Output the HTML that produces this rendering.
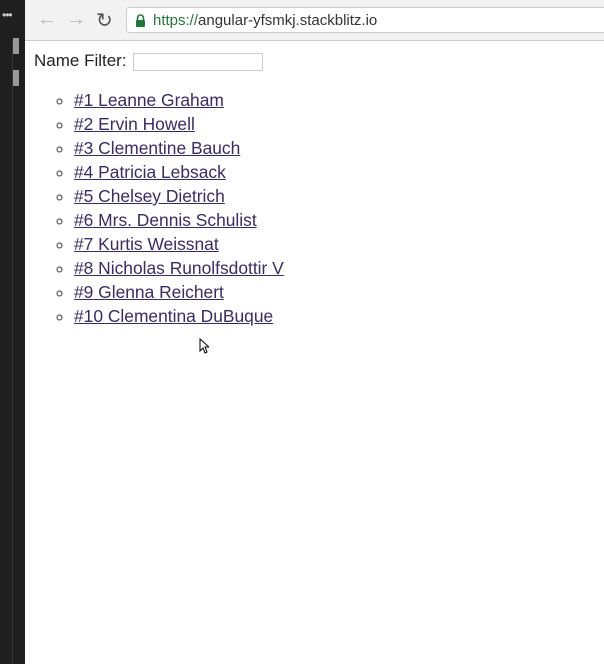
<!DOCTYPE html>
<html><head><style>
body{margin:0;width:604px;height:664px;overflow:hidden;background:#fff;position:relative;font-family:"Liberation Sans",sans-serif}
#side{position:absolute;left:0;top:0;width:25px;height:664px;background:#1f1f1f}
#side .ln{position:absolute;left:12px;top:40px;width:1px;height:624px;background:#333}
#side .b1{position:absolute;left:13px;top:38px;width:6px;height:16px;background:#999}
#side .b2{position:absolute;left:13px;top:70px;width:6px;height:16px;background:#999}
#side .dots{position:absolute;left:2px;top:8px;color:#ccc;font-size:12px;letter-spacing:-1px}
#bar{position:absolute;left:25px;top:0;width:579px;height:40px;background:#f2f2f2;border-bottom:1px solid #ccc}
#url{position:absolute;left:126px;top:7px;width:490px;height:26px;background:#fff;border:1px solid #ccc;border-radius:3px;box-sizing:border-box}
#url .t{position:absolute;left:26px;top:4px;font-size:15px;color:#333;white-space:nowrap}
#url .g{color:#1f7a3a}
.nav{position:absolute;top:8px;font-size:20px;color:#bbb}
#page{position:absolute;left:34px;top:51px}
.lab{font-size:17px;color:#222}
input{width:128px;height:16px;border:1px solid #ccc;vertical-align:middle;margin-left:6px;padding:0}
ul{margin:0;padding:0;position:absolute;left:40px;top:37px;list-style:circle;width:400px}
li{font-size:17.4px;line-height:24px;color:#333}
a{color:#3a2a68;text-decoration:underline}
</style></head><body>
<div id="side"><div class="ln"></div><div class="b1"></div><div class="b2"></div><div class="dots">•••</div></div>
<div id="bar"></div>
<div class="nav" style="left:37px">←</div><div class="nav" style="left:66px">→</div><div class="nav" style="left:96px;color:#555">↻</div>
<div id="url"><svg style="position:absolute;left:8px;top:6px" width="11" height="13"><path d="M2.5 6V4a3 3 0 0 1 6 0v2" stroke="#1f7a3a" stroke-width="1.6" fill="none"/><rect x="1" y="6" width="9" height="7" rx="1" fill="#1f7a3a"/></svg><div class="t"><span class="g">https://</span>angular-yfsmkj.stackblitz.io</div></div>
<div id="page"><span class="lab">Name Filter:</span><input>
<ul>
<li><a>#1 Leanne Graham</a></li>
<li><a>#2 Ervin Howell</a></li>
<li><a>#3 Clementine Bauch</a></li>
<li><a>#4 Patricia Lebsack</a></li>
<li><a>#5 Chelsey Dietrich</a></li>
<li><a>#6 Mrs. Dennis Schulist</a></li>
<li><a>#7 Kurtis Weissnat</a></li>
<li><a>#8 Nicholas Runolfsdottir V</a></li>
<li><a>#9 Glenna Reichert</a></li>
<li><a>#10 Clementina DuBuque</a></li>
</ul></div>
<svg style="position:absolute;left:199px;top:338px" width="10" height="16"><path d="M1 1v12l3-3 2 5 2-1-2-5h4z" fill="#fff" stroke="#000" stroke-width="1"/></svg>
</body></html>
